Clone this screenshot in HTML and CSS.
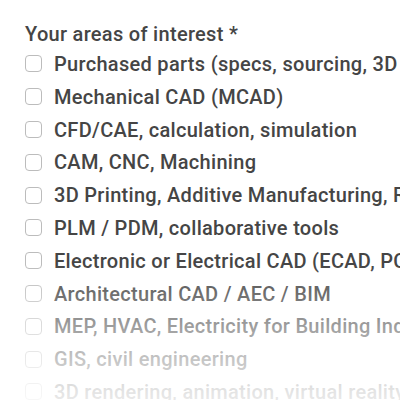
FILE: index.html
```html
<!DOCTYPE html>
<html>
<head>
<meta charset="utf-8">
<link rel="stylesheet" href="styles.css">
</head>
<body>
<div class="field">
  <div class="label">Your areas of interest *</div>
  <ul class="options">
    <li class="option"><span class="box"></span><span class="text">Purchased parts (specs, sourcing, 3D models)</span></li>
    <li class="option"><span class="box"></span><span class="text">Mechanical CAD (MCAD)</span></li>
    <li class="option"><span class="box"></span><span class="text">CFD/CAE, calculation, simulation</span></li>
    <li class="option"><span class="box"></span><span class="text">CAM, CNC, Machining</span></li>
    <li class="option"><span class="box"></span><span class="text">3D Printing, Additive Manufacturing, Rapid Prototyping</span></li>
    <li class="option"><span class="box"></span><span class="text">PLM / PDM, collaborative tools</span></li>
    <li class="option"><span class="box"></span><span class="text">Electronic or Electrical CAD (ECAD, PCB)</span></li>
    <li class="option"><span class="box"></span><span class="text">Architectural CAD / AEC / BIM</span></li>
    <li class="option"><span class="box"></span><span class="text">MEP, HVAC, Electricity for Building Industry</span></li>
    <li class="option"><span class="box"></span><span class="text">GIS, civil engineering</span></li>
    <li class="option"><span class="box"></span><span class="text">3D rendering, animation, virtual reality</span></li>
  </ul>
  <div class="fade"></div>
</div>
</body>
</html>
```
FILE: styles.css
```css
html, body {
  margin: 0;
  padding: 0;
  background: #ffffff;
  overflow: hidden;
  width: 400px;
  height: 400px;
}
body {
  font-family: Roboto, "Liberation Sans", sans-serif;
  color: #454545;
}
.field {
  padding: 22px 0 0 25px;
  white-space: nowrap;
}
.label {
  font-size: 20px;
  font-weight: 500;
  letter-spacing: 0.3px;
  line-height: 24px;
  height: 25.6px;
}
.options {
  list-style: none;
  margin: 0;
  padding: 0;
}
.option {
  display: flex;
  align-items: center;
  gap: 12px;
  height: 32.8px;
  font-size: 20px;
  font-weight: 500;
  letter-spacing: 0.3px;
}
.box {
  flex: none;
  width: 15px;
  height: 15px;
  border: 1.5px solid #bcbcbc;
  border-radius: 4px;
  background: #fff;
}
.fade {
  position: absolute;
  left: 0;
  top: 0;
  width: 400px;
  height: 400px;
  pointer-events: none;
  background: linear-gradient(to bottom,
    rgba(255,255,255,0) 0px,
    rgba(255,255,255,0) 264px,
    rgba(255,255,255,0.22) 293px,
    rgba(255,255,255,0.48) 326px,
    rgba(255,255,255,0.68) 358px,
    rgba(255,255,255,0.85) 391px,
    rgba(255,255,255,0.88) 400px);
}
```
